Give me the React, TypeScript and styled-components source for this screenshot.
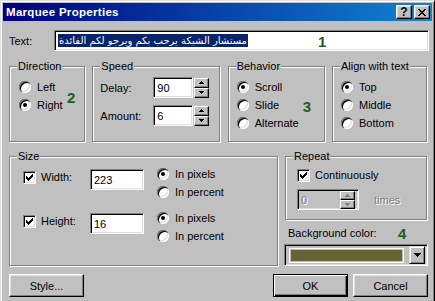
import React from 'react';
import styled, { createGlobalStyle } from 'styled-components';

const GlobalStyle = createGlobalStyle`
  html, body {
    margin: 0;
    padding: 0;
    overflow: hidden;
    background: #c0c0c0;
  }
  body {
    font-family: "Liberation Sans", Arial, sans-serif;
    font-size: 11px;
    color: #000;
  }
`;

const Window = styled.div`
  box-sizing: border-box;
  width: 435px;
  height: 306px;
  padding: 2px;
  background: #c0c0c0;
  border: 1px solid;
  border-color: #dfdfdf #000 #000 #dfdfdf;
  box-shadow: inset 1px 1px 0 #fff, inset -1px -1px 0 #808080;
  display: flex;
  flex-direction: column;
`;

const TitleBar = styled.div`
  height: 18px;
  display: flex;
  align-items: center;
  justify-content: space-between;
  padding: 0 2px 0 3px;
  background: linear-gradient(to right, #000080, #1084d0);
`;

const Title = styled.span`
  color: #fff;
  font-weight: bold;
  font-size: 11.5px;
  letter-spacing: 0.3px;
`;

const TitleButtons = styled.div`
  display: flex;
  gap: 2px;
`;

const TitleButton = styled.div`
  box-sizing: border-box;
  width: 16px;
  height: 14px;
  background: #c0c0c0;
  border: 1px solid;
  border-color: #fff #000 #000 #fff;
  box-shadow: inset -1px -1px 0 #808080, inset 1px 1px 0 #dfdfdf;
  display: flex;
  align-items: center;
  justify-content: center;
  font-weight: bold;
  font-size: 12px;
  line-height: 1;
`;

const Body = styled.div`
  display: flex;
  flex-direction: column;
  padding: 0 5px 0 6px;
`;

const TextRow = styled.div`
  display: flex;
  align-items: center;
  margin-top: 9px;
  margin-right: -2px;
`;

const FieldLabel = styled.span<{ $w?: number }>`
  width: ${p => p.$w ?? 45}px;
  flex: none;
`;

const Sunken = styled.div<{ $w?: number; $disabled?: boolean }>`
  box-sizing: border-box;
  position: relative;
  height: 21px;
  ${p => (p.$w ? `width: ${p.$w}px;` : 'flex: 1;')}
  background: ${p => (p.$disabled ? '#c0c0c0' : '#fff')};
  border: 1px solid;
  border-color: #808080 #fff #fff #808080;
  box-shadow: inset 1px 1px 0 #000, inset -1px -1px 0 #dfdfdf;
  display: flex;
  align-items: center;
  padding: 0 3px;
  color: ${p => (p.$disabled ? '#808080' : '#000')};
`;

const Selected = styled.span`
  background: #0a246a;
  color: #fff;
  font-family: "DejaVu Sans", sans-serif;
  font-size: 10px;
  line-height: 13px;
  padding: 0 1px;
  white-space: nowrap;
`;

const Marker = styled.span<{ $x: number; $y: number }>`
  position: absolute;
  left: ${p => p.$x}px;
  top: ${p => p.$y}px;
  color: #1f5c1f;
  font-family: "Liberation Sans", Arial, sans-serif;
  font-weight: bold;
  font-size: 15px;
  line-height: 15px;
`;

const GroupRow = styled.div`
  display: flex;
  justify-content: space-between;
  margin-top: 15px;
`;

const Group = styled.div<{ $w: number; $h: number; $pt?: number; $pl?: number }>`
  box-sizing: border-box;
  position: relative;
  width: ${p => p.$w}px;
  height: ${p => p.$h}px;
  border: 1px solid #808080;
  box-shadow: inset 1px 1px 0 #fff, 1px 1px 0 #fff;
  padding: ${p => p.$pt ?? 11}px 4px 0 ${p => p.$pl ?? 8}px;
  display: flex;
  flex-direction: column;
`;

const Caption = styled.span`
  position: absolute;
  top: -7px;
  left: 7px;
  padding: 0 1px;
  line-height: 13px;
  background: #c0c0c0;
`;

const OptionRow = styled.div`
  height: 18px;
  display: flex;
  align-items: center;
  gap: 6px;
  white-space: nowrap;
`;

const Radio = styled.span<{ $on?: boolean }>`
  position: relative;
  flex: none;
  width: 12px;
  height: 12px;
  border-radius: 50%;
  background: #fff;
  box-shadow: inset 1px 1px 0 #808080, inset 2px 2px 0 #000, inset -1px -1px 0 #fff,
    inset -2px -2px 0 #dfdfdf;
  &::after {
    content: '';
    display: ${p => (p.$on ? 'block' : 'none')};
    position: absolute;
    left: 4px;
    top: 4px;
    width: 4px;
    height: 4px;
    border-radius: 50%;
    background: #000;
  }
`;

const CheckBox = styled.span`
  box-sizing: border-box;
  flex: none;
  width: 13px;
  height: 13px;
  background: #fff;
  border: 1px solid;
  border-color: #808080 #fff #fff #808080;
  box-shadow: inset 1px 1px 0 #000, inset -1px -1px 0 #dfdfdf;
  display: flex;
  align-items: center;
  justify-content: center;
`;

const SpinRow = styled.div`
  display: flex;
  align-items: center;
  height: 21px;
  & + & {
    margin-top: 7px;
  }
`;

const Spin = styled.div<{ $inset?: boolean }>`
  display: flex;
  flex-direction: column;
  width: 15px;
  margin-left: ${p => (p.$inset ? 'auto' : '1px')};
`;

const SpinButton = styled.div<{ $h?: number }>`
  box-sizing: border-box;
  height: ${p => p.$h ?? 9}px;
  background: #c0c0c0;
  border: 1px solid;
  border-color: #fff #000 #000 #fff;
  box-shadow: inset -1px -1px 0 #808080;
  display: flex;
  align-items: center;
  justify-content: center;
`;

const MiddleRow = styled.div`
  display: flex;
  justify-content: space-between;
  margin-top: 14px;
`;

const SizeBlock = styled.div`
  display: flex;
  align-items: flex-start;
  & + & {
    margin-top: 8px;
  }
`;

const CheckLabel = styled.div<{ $w?: number }>`
  display: flex;
  align-items: center;
  gap: 5px;
  height: 18px;
  padding-top: 3px;
  ${p => (p.$w ? `width: ${p.$w}px;` : '')}
`;

const SizeInput = styled(Sunken)`
  margin-top: 4px;
`;

const UnitColumn = styled.div`
  display: flex;
  flex-direction: column;
  margin-left: 13px;
`;

const RightColumn = styled.div`
  width: 142px;
  display: flex;
  flex-direction: column;
`;

const RepeatInner = styled.div`
  display: flex;
  align-items: center;
  margin-top: 5px;
  gap: 15px;
`;

const DisabledText = styled.span`
  color: #808080;
  text-shadow: 1px 1px 0 #fff;
`;

const ColorLabel = styled.div`
  position: relative;
  margin-top: 7px;
  margin-left: 3px;
  line-height: 13px;
`;

const ColorSelect = styled.div`
  box-sizing: border-box;
  height: 22px;
  margin: 4px -1px 0 -1px;
  border: 1px solid;
  border-color: #808080 #fff #fff #808080;
  box-shadow: inset 1px 1px 0 #000, inset -1px -1px 0 #dfdfdf;
  display: flex;
  align-items: center;
  padding: 2px 2px 2px 6px;
  gap: 7px;
`;

const Swatch = styled.div<{ $color: string }>`
  flex: 1;
  height: 11px;
  background: ${p => p.$color};
  outline: 1px solid #fff;
  outline-offset: 1px;
`;

const DropButton = styled.div`
  box-sizing: border-box;
  width: 16px;
  height: 18px;
  background: #c0c0c0;
  border: 1px solid;
  border-color: #dfdfdf #000 #000 #dfdfdf;
  box-shadow: inset 1px 1px 0 #fff, inset -1px -1px 0 #808080;
  display: flex;
  align-items: center;
  justify-content: center;
`;

const ButtonRow = styled.div`
  display: flex;
  align-items: center;
  gap: 5px;
  margin-top: 8px;
  margin-right: -1px;
`;

const Button = styled.div<{ $default?: boolean }>`
  box-sizing: border-box;
  width: 75px;
  height: 23px;
  background: #c0c0c0;
  display: flex;
  align-items: center;
  justify-content: center;
  border: 1px solid;
  border-color: ${p => (p.$default ? '#000' : '#fff #000 #000 #fff')};
  box-shadow: ${p =>
    p.$default
      ? 'inset 1px 1px 0 #fff, inset -1px -1px 0 #000, inset -2px -2px 0 #808080'
      : 'inset -1px -1px 0 #808080, inset 1px 1px 0 #dfdfdf'};
`;

const Spacer = styled.div`
  flex: 1;
`;

function Arrow ({ down, color = '#000' }: { down?: boolean; color?: string }) {
  return (
    <svg width='5' height='3' viewBox='0 0 5 3' shapeRendering='crispEdges'>
      <path d={down ? 'M0 0h5v1h-5zM1 1h3v1h-3zM2 2h1v1h-1z' : 'M2 0h1v1h-1zM1 1h3v1h-3zM0 2h5v1h-5z'} fill={color} />
    </svg>
  );
}

function Check () {
  return (
    <svg width='7' height='7' viewBox='0 0 7 7' shapeRendering='crispEdges'>
      <path d='M0 2h1v3h-1zM1 3h1v3h-1zM2 4h1v3h-1zM3 3h1v3h-1zM4 2h1v3h-1zM5 1h1v3h-1zM6 0h1v3h-1z' fill='#000' />
    </svg>
  );
}

function SpinBox ({ value, width }: { value: string; width: number }) {
  return (
    <>
      <Sunken $w={width}>{value}</Sunken>
      <Spin>
        <SpinButton $h={10}><Arrow /></SpinButton>
        <SpinButton $h={10}><Arrow down /></SpinButton>
      </Spin>
    </>
  );
}

function SizeRow ({ label, value }: { label: string; value: string }) {
  return (
    <SizeBlock>
      <CheckLabel $w={67}>
        <CheckBox><Check /></CheckBox>
        <span>{label}</span>
      </CheckLabel>
      <SizeInput $w={54}>{value}</SizeInput>
      <UnitColumn>
        <OptionRow><Radio $on />In pixels</OptionRow>
        <OptionRow><Radio />In percent</OptionRow>
      </UnitColumn>
    </SizeBlock>
  );
}

export default function App () {
  return (
    <>
      <GlobalStyle />
      <Window>
        <TitleBar>
          <Title>Marquee Properties</Title>
          <TitleButtons>
            <TitleButton>?</TitleButton>
            <TitleButton>
              <svg width='8' height='7' viewBox='0 0 8 7' shapeRendering='crispEdges'>
                <path d='M0 0h2v1h-2zM6 0h2v1h-2zM1 1h2v1h-2zM5 1h2v1h-2zM2 2h4v1h-4zM3 3h2v1h-2zM2 4h4v1h-4zM1 5h2v1h-2zM5 5h2v1h-2zM0 6h2v1h-2zM6 6h2v1h-2z' fill='#000' />
              </svg>
            </TitleButton>
          </TitleButtons>
        </TitleBar>
        <Body>
          <TextRow>
            <FieldLabel>Text:</FieldLabel>
            <Sunken>
              <Selected>مستشار الشبكة يرحب بكم ويرجو لكم الفائدة</Selected>
              <Marker $x={263} $y={3}>1</Marker>
            </Sunken>
          </TextRow>

          <GroupRow>
            <Group $w={76} $h={76} $pl={9}>
              <Caption>Direction</Caption>
              <OptionRow><Radio />Left</OptionRow>
              <OptionRow><Radio $on />Right</OptionRow>
              <Marker $x={57} $y={23}>2</Marker>
            </Group>
            <Group $w={128} $h={76} $pt={10} $pl={7}>
              <Caption>Speed</Caption>
              <SpinRow>
                <FieldLabel $w={53}>Delay:</FieldLabel>
                <SpinBox value='90' width={40} />
              </SpinRow>
              <SpinRow>
                <FieldLabel $w={53}>Amount:</FieldLabel>
                <SpinBox value='6' width={40} />
              </SpinRow>
            </Group>
            <Group $w={97} $h={76}>
              <Caption>Behavior</Caption>
              <OptionRow><Radio $on />Scroll</OptionRow>
              <OptionRow><Radio />Slide</OptionRow>
              <OptionRow><Radio />Alternate</OptionRow>
              <Marker $x={74} $y={32}>3</Marker>
            </Group>
            <Group $w={95} $h={76}>
              <Caption>Align with text</Caption>
              <OptionRow><Radio $on />Top</OptionRow>
              <OptionRow><Radio />Middle</OptionRow>
              <OptionRow><Radio />Bottom</OptionRow>
            </Group>
          </GroupRow>

          <MiddleRow>
            <Group $w={269} $h={110} $pt={8} $pl={13}>
              <Caption>Size</Caption>
              <SizeRow label='Width:' value='223' />
              <SizeRow label='Height:' value='16' />
            </Group>
            <RightColumn>
              <Group $w={142} $h={64} $pt={6} $pl={11}>
                <Caption>Repeat</Caption>
                <CheckLabel>
                  <CheckBox><Check /></CheckBox>
                  <span>Continuously</span>
                </CheckLabel>
                <RepeatInner>
                  <Sunken $w={62} $disabled>
                    <DisabledText>0</DisabledText>
                    <Spin $inset>
                      <SpinButton><Arrow color='#808080' /></SpinButton>
                      <SpinButton><Arrow down color='#808080' /></SpinButton>
                    </Spin>
                  </Sunken>
                  <DisabledText>times</DisabledText>
                </RepeatInner>
              </Group>
              <ColorLabel>
                Background color:
                <Marker $x={110} $y={-1}>4</Marker>
              </ColorLabel>
              <ColorSelect>
                <Swatch $color='#656435' />
                <DropButton>
                  <svg width='7' height='4' viewBox='0 0 7 4' shapeRendering='crispEdges'>
                    <path d='M0 0h7v1h-7zM1 1h5v1h-5zM2 2h3v1h-3zM3 3h1v1h-1z' fill='#000' />
                  </svg>
                </DropButton>
              </ColorSelect>
            </RightColumn>
          </MiddleRow>

          <ButtonRow>
            <Button>Style...</Button>
            <Spacer />
            <Button $default>OK</Button>
            <Button>Cancel</Button>
          </ButtonRow>
        </Body>
      </Window>
    </>
  );
}
